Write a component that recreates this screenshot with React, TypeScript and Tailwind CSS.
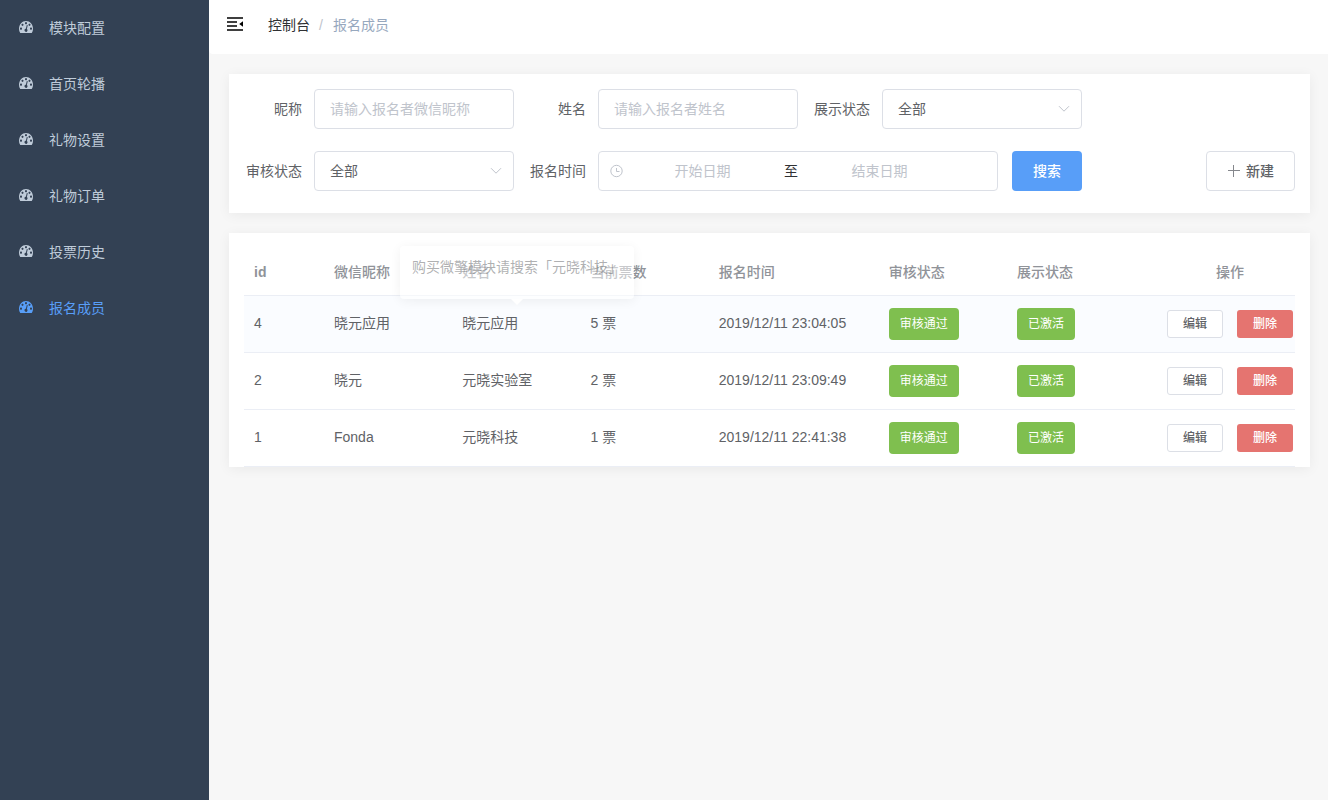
import React, { useState } from 'react';

const menu = ['模块配置', '首页轮播', '礼物设置', '礼物订单', '投票历史', '报名成员'];

const rows = [
  { id: 4, nickname: '晓元应用', name: '晓元应用', votes: '5 票', time: '2019/12/11 23:04:05' },
  { id: 2, nickname: '晓元', name: '元晓实验室', votes: '2 票', time: '2019/12/11 23:09:49' },
  { id: 1, nickname: 'Fonda', name: '元晓科技', votes: '1 票', time: '2019/12/11 22:41:38' },
];

const DashboardIcon: React.FC = () => (
  <svg viewBox="0 0 128 100" preserveAspectRatio="none" className="w-[14px] h-3 mb-0.5 shrink-0" fill="currentColor" aria-hidden="true">
    <path d="M27.429 63.638c0-2.508-.893-4.65-2.679-6.424-1.786-1.775-3.94-2.662-6.464-2.662-2.524 0-4.679.887-6.465 2.662-1.785 1.774-2.678 3.916-2.678 6.424 0 2.508.893 4.65 2.678 6.424 1.786 1.775 3.94 2.662 6.465 2.662 2.524 0 4.678-.887 6.464-2.662 1.786-1.775 2.679-3.916 2.679-6.424zm13.714-31.801c0-2.508-.893-4.65-2.679-6.424-1.785-1.775-3.94-2.662-6.464-2.662-2.524 0-4.679.887-6.464 2.662-1.786 1.774-2.679 3.916-2.679 6.424 0 2.508.893 4.65 2.679 6.424 1.785 1.774 3.94 2.662 6.464 2.662 2.524 0 4.679-.888 6.464-2.662 1.786-1.775 2.679-3.916 2.679-6.424zM71.714 65.98l7.215-27.116c.285-1.23.107-2.378-.536-3.443-.643-1.064-1.56-1.762-2.75-2.094-1.19-.33-2.333-.177-3.429.462-1.095.639-1.81 1.573-2.143 2.804l-7.214 27.116c-2.857.237-5.405 1.266-7.643 3.088-2.238 1.822-3.738 4.152-4.5 6.992-.952 3.644-.476 7.098 1.429 10.364 1.905 3.265 4.69 5.37 8.357 6.317 3.667.947 7.143.474 10.429-1.42 3.285-1.892 5.404-4.66 6.357-8.305.762-2.84.619-5.607-.429-8.305-1.047-2.697-2.762-4.85-5.143-6.46zm47.143-2.342c0-2.508-.893-4.65-2.678-6.424-1.786-1.775-3.94-2.662-6.465-2.662-2.524 0-4.678.887-6.464 2.662-1.786 1.774-2.679 3.916-2.679 6.424 0 2.508.893 4.65 2.679 6.424 1.786 1.775 3.94 2.662 6.464 2.662 2.524 0 4.679-.887 6.465-2.662 1.785-1.775 2.678-3.916 2.678-6.424zm-45.714-45.43c0-2.509-.893-4.65-2.679-6.425C68.68 10.01 66.524 9.122 64 9.122c-2.524 0-4.679.887-6.464 2.661-1.786 1.775-2.679 3.916-2.679 6.425 0 2.508.893 4.65 2.679 6.424 1.785 1.774 3.94 2.662 6.464 2.662 2.524 0 4.679-.888 6.464-2.662 1.786-1.775 2.679-3.916 2.679-6.424zm32 13.629c0-2.508-.893-4.65-2.679-6.424-1.785-1.775-3.94-2.662-6.464-2.662-2.524 0-4.679.887-6.464 2.662-1.786 1.774-2.679 3.916-2.679 6.424 0 2.508.893 4.65 2.679 6.424 1.785 1.774 3.94 2.662 6.464 2.662 2.524 0 4.679-.888 6.464-2.662 1.786-1.775 2.679-3.916 2.679-6.424zM128 63.638c0 12.351-3.357 23.78-10.071 34.286-.905 1.372-2.19 2.058-3.858 2.058H13.93c-1.667 0-2.953-.686-3.858-2.058C3.357 87.465 0 76.037 0 63.638c0-8.613 1.69-16.847 5.071-24.703C8.452 31.08 13 24.312 18.714 18.634c5.715-5.68 12.524-10.199 20.429-13.559C47.048 1.715 55.333.035 64 .035c8.667 0 16.952 1.68 24.857 5.04 7.905 3.36 14.714 7.88 20.429 13.559 5.714 5.678 10.262 12.446 13.643 20.301 3.38 7.856 5.071 16.09 5.071 24.703z" />
  </svg>
);

const CollapseIcon: React.FC = () => (
  <svg viewBox="0 0 16 14" className="w-4 h-[14px]" fill="currentColor" aria-hidden="true">
    <path d="M0 .2h16v1.5H0zM0 4.2h10v1.5H0zM0 8.3h10v1.5H0zM0 12.3h16v1.5H0zM16 4.2v5.6L12.2 7z" />
  </svg>
);

const Chevron: React.FC = () => (
  <svg viewBox="0 0 12 8" className="absolute right-3 top-4 w-3 h-2 pointer-events-none" fill="none" stroke="#c0c4cc" aria-hidden="true">
    <path d="M1 1.2l5 5 5-5" />
  </svg>
);

const Label: React.FC<{ htmlFor: string; children: React.ReactNode }> = ({ htmlFor, children }) => (
  <label htmlFor={htmlFor} className="w-[70px] pr-3 text-right leading-10 shrink-0">{children}</label>
);

const StatusSelect: React.FC<{ id: string }> = ({ id }) => (
  <div className="relative w-[200px]">
    <select id={id} className="w-full h-10 pl-[15px] pr-8 border border-[#dcdfe6] rounded appearance-none bg-white focus:outline-none focus:border-[#589ef8]">
      <option>全部</option>
      <option>是</option>
      <option>否</option>
    </select>
    <Chevron />
  </div>
);

const inputStyle = 'w-[200px] h-10 px-[15px] border border-[#dcdfe6] rounded placeholder:text-[#c0c4cc] focus:outline-none focus:border-[#589ef8]';

const SearchPanel: React.FC = () => {
  const [nickname, setNickname] = useState('');
  const [name, setName] = useState('');

  return (
    <form onSubmit={e => e.preventDefault()} className="bg-white px-[15px] pt-[15px] pb-[22px] shadow-[0_2px_12px_0_rgba(0,0,0,0.06)]">
      <div className="flex flex-wrap gap-x-[14px] gap-y-[22px]">
        <div className="flex">
          <Label htmlFor="nickname">昵称</Label>
          <input id="nickname" value={nickname} onChange={e => setNickname(e.target.value)} placeholder="请输入报名者微信昵称" className={inputStyle} />
        </div>
        <div className="flex">
          <Label htmlFor="name">姓名</Label>
          <input id="name" value={name} onChange={e => setName(e.target.value)} placeholder="请输入报名者姓名" className={inputStyle} />
        </div>
        <div className="flex">
          <Label htmlFor="display">展示状态</Label>
          <StatusSelect id="display" />
        </div>
      </div>

      <div className="flex flex-wrap gap-x-[14px] gap-y-[22px] mt-[22px]">
        <div className="flex">
          <Label htmlFor="audit">审核状态</Label>
          <StatusSelect id="audit" />
        </div>
        <div className="flex">
          <Label htmlFor="start">报名时间</Label>
          <div className="flex items-center w-[400px] h-10 px-[11px] border border-[#dcdfe6] rounded">
            <svg viewBox="0 0 14 14" className="w-[14px] h-[14px] shrink-0" fill="none" stroke="#c0c4cc" aria-hidden="true">
              <circle cx="6.5" cy="7" r="5.7" />
              <path d="M6.5 4v3.5h3" />
            </svg>
            <input id="start" placeholder="开始日期" className="w-[157px] text-center placeholder:text-[#c0c4cc] focus:outline-none" />
            <span className="w-5 text-center text-[#303133]">至</span>
            <input aria-label="结束日期" placeholder="结束日期" className="w-[157px] text-center placeholder:text-[#c0c4cc] focus:outline-none" />
          </div>
        </div>
        <button type="submit" className="w-[70px] h-10 rounded bg-[#589ef8] text-white font-medium">搜索</button>
        <button type="button" className="flex items-center justify-center gap-[5px] w-[89px] h-10 ml-auto border border-[#dcdfe6] rounded font-medium">
          <svg viewBox="0 0 14 14" className="w-[14px] h-[14px]" fill="none" stroke="#85878c" aria-hidden="true">
            <path d="M1 6.5h12M6.5 1v12" />
          </svg>
          新建
        </button>
      </div>
    </form>
  );
};

const tagStyle = 'inline-block align-middle h-8 px-[11px] rounded bg-[#7fbf4f] text-white text-xs leading-8';

const MembersTable: React.FC = () => (
  <section className="relative bg-white px-[15px] pt-[15px] shadow-[0_2px_12px_0_rgba(0,0,0,0.06)]">
    <table className="w-full table-fixed border-separate border-spacing-0 text-left">
      <colgroup>
        <col className="w-20" />
        <col />
        <col />
        <col />
        <col className="w-[170px]" />
        <col />
        <col className="w-[158px]" />
        <col className="w-[130px]" />
      </colgroup>
      <thead>
        <tr className="text-[#909399] *:h-12 *:px-[10px] *:border-b *:border-[#ebeef5] *:font-medium">
          <th className="font-bold!">id</th>
          <th>微信昵称</th>
          <th>姓名</th>
          <th>当前票数</th>
          <th>报名时间</th>
          <th>审核状态</th>
          <th>展示状态</th>
          <th className="text-center">操作</th>
        </tr>
      </thead>
      <tbody>
        {rows.map((row, i) => (
          <tr key={row.id} className={`*:h-[57px] *:px-[10px] *:border-b *:border-[#ebeef5] ${i === 0 ? 'bg-[#fafcff]' : ''}`}>
            <td className="pb-0.5">{row.id}</td>
            <td className="pb-0.5">{row.nickname}</td>
            <td className="pb-0.5">{row.name}</td>
            <td className="pb-0.5">{row.votes}</td>
            <td className="pb-0.5 whitespace-nowrap">{row.time}</td>
            <td><span className={tagStyle}>审核通过</span></td>
            <td><span className={tagStyle}>已激活</span></td>
            <td className="px-0!">
              <div className="flex justify-center gap-[14px] text-xs font-medium">
                <button className="w-14 h-7 border border-[#dcdfe6] rounded-[3px] bg-white">编辑</button>
                <button className="w-14 h-7 rounded-[3px] bg-[#e57470] text-white">删除</button>
              </div>
            </td>
          </tr>
        ))}
      </tbody>
    </table>

    {/* Half-faded popover above the name cell */}
    <div role="tooltip" className="absolute left-[171px] top-[13px] w-[234px] h-[53px] px-3 py-[11px] rounded bg-white/50 text-[#606266]/50 leading-5 whitespace-nowrap shadow-[0_2px_12px_0_rgba(0,0,0,0.06)]">
      购买微擎模块请搜索「元晓科技」
      <svg viewBox="0 0 12 6" className="absolute left-[111px] top-full w-3 h-[6px]" aria-hidden="true">
        <path d="M0 0h12L6 6z" fill="#fff" />
      </svg>
    </div>
  </section>
);

const App: React.FC = () => (
  <div className="flex min-h-screen bg-[#f7f7f7] text-sm text-[#606266] font-['Liberation_Sans','Noto_Sans_CJK_SC',sans-serif]">
    <aside className="w-[209px] shrink-0 bg-[#334154]">
      <nav>
        {menu.map((item, i) => (
          <a key={item} href="#" className={`flex items-center gap-4 h-14 pl-[19px] ${i === menu.length - 1 ? 'text-[#589ef8]' : 'text-[#bfcbd9]'}`}>
            <DashboardIcon />
            {item}
          </a>
        ))}
      </nav>
    </aside>

    <div className="flex-1 min-w-0">
      <header className="flex items-center h-[54px] pl-[18px] pb-1 bg-white rounded-bl">
        <button aria-label="收起菜单" className="mb-0.5 text-black"><CollapseIcon /></button>
        <nav className="flex items-center ml-[25px]">
          <a href="#" className="text-[#303133]">控制台</a>
          <span className="ml-[9px] mr-[10px] text-[#c0c4cc]">/</span>
          <span className="text-[#97a8be]">报名成员</span>
        </nav>
      </header>
      <main className="flex flex-col gap-5 pt-5 pl-5 pr-[18px]">
        <SearchPanel />
        <MembersTable />
      </main>
    </div>
  </div>
);

export default App;
